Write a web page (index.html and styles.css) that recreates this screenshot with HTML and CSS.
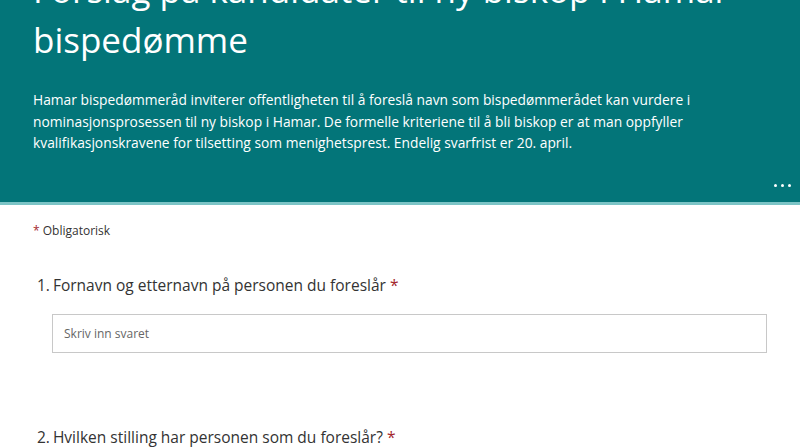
FILE: index.html
```html
<!DOCTYPE html>
<html lang="no">
<head>
<meta charset="utf-8">
<title>Forslag på kandidater til ny biskop i Hamar bispedømme</title>
<link rel="stylesheet" href="styles.css">
</head>
<body>
<header class="hero">
  <h1 class="hero-title">Forslag på kandidater til ny biskop i Hamar bispedømme</h1>
  <p class="hero-desc">Hamar bispedømmeråd inviterer offentligheten til å foreslå navn som bispedømmerådet kan vurdere i nominasjonsprosessen til ny biskop i Hamar. De formelle kriteriene til å bli biskop er at man oppfyller kvalifikasjonskravene for tilsetting som menighetsprest. Endelig svarfrist er 20. april.</p>
  <div class="hero-more"><span></span><span></span><span></span></div>
</header>
<main class="form">
  <p class="required-note"><span class="star">*</span> Obligatorisk</p>
  <section class="question">
    <div class="q-title"><span class="q-num">1.</span>Fornavn og etternavn på personen du foreslår <span class="star">*</span></div>
    <div class="q-input">Skriv inn svaret</div>
  </section>
  <section class="question q2">
    <div class="q-title"><span class="q-num">2.</span>Hvilken stilling har personen som du foreslår? <span class="star">*</span></div>
  </section>
</main>
</body>
</html>
```
FILE: styles.css
```css
* { box-sizing: border-box; }
html, body { margin: 0; padding: 0; background: #fff; }
body {
  font-family: "Open Sans", "Noto Sans", "Liberation Sans", sans-serif;
  width: 800px;
  height: 448px;
  overflow: hidden;
}
.hero {
  background: #037579;
  color: #fff;
  height: 205px;
  border-bottom: 3px solid #7cc4c6;
  padding: 0 33px;
  display: flex;
  flex-direction: column;
}
.hero-title {
  margin: -35px 0 0 0;
  font-weight: 400;
  font-size: 35px;
  line-height: 50px;
  width: 730px;
}
.hero-desc {
  margin: 24px 0 0 0;
  font-size: 13.8px;
  line-height: 21.5px;
  width: 700px;
}
.hero-more {
  margin-top: auto;
  align-self: flex-end;
  margin-right: -24px;
  margin-bottom: 15px;
  display: flex;
  gap: 4px;
}
.hero-more span {
  width: 3px;
  height: 3px;
  border-radius: 50%;
  background: #fff;
}
.form {
  padding: 17px 33px 0 33px;
}
.required-note {
  margin: 0;
  font-size: 12px;
  color: #333;
  line-height: 18px;
}
.star { color: #a4262c; }
.question { margin-top: 34px; padding-left: 4px; }
.q-title {
  font-size: 15.5px;
  color: #333;
  line-height: 22px;
}
.q-num { margin-right: 3px; }
.q-input {
  margin: 18px 0 0 15px;
  width: 715px;
  height: 39px;
  border: 1px solid #c8c8c8;
  padding: 0 11px;
  display: flex;
  align-items: center;
  font-size: 12px;
  color: #666;
}
.q2 { margin-top: 73px; }
```
